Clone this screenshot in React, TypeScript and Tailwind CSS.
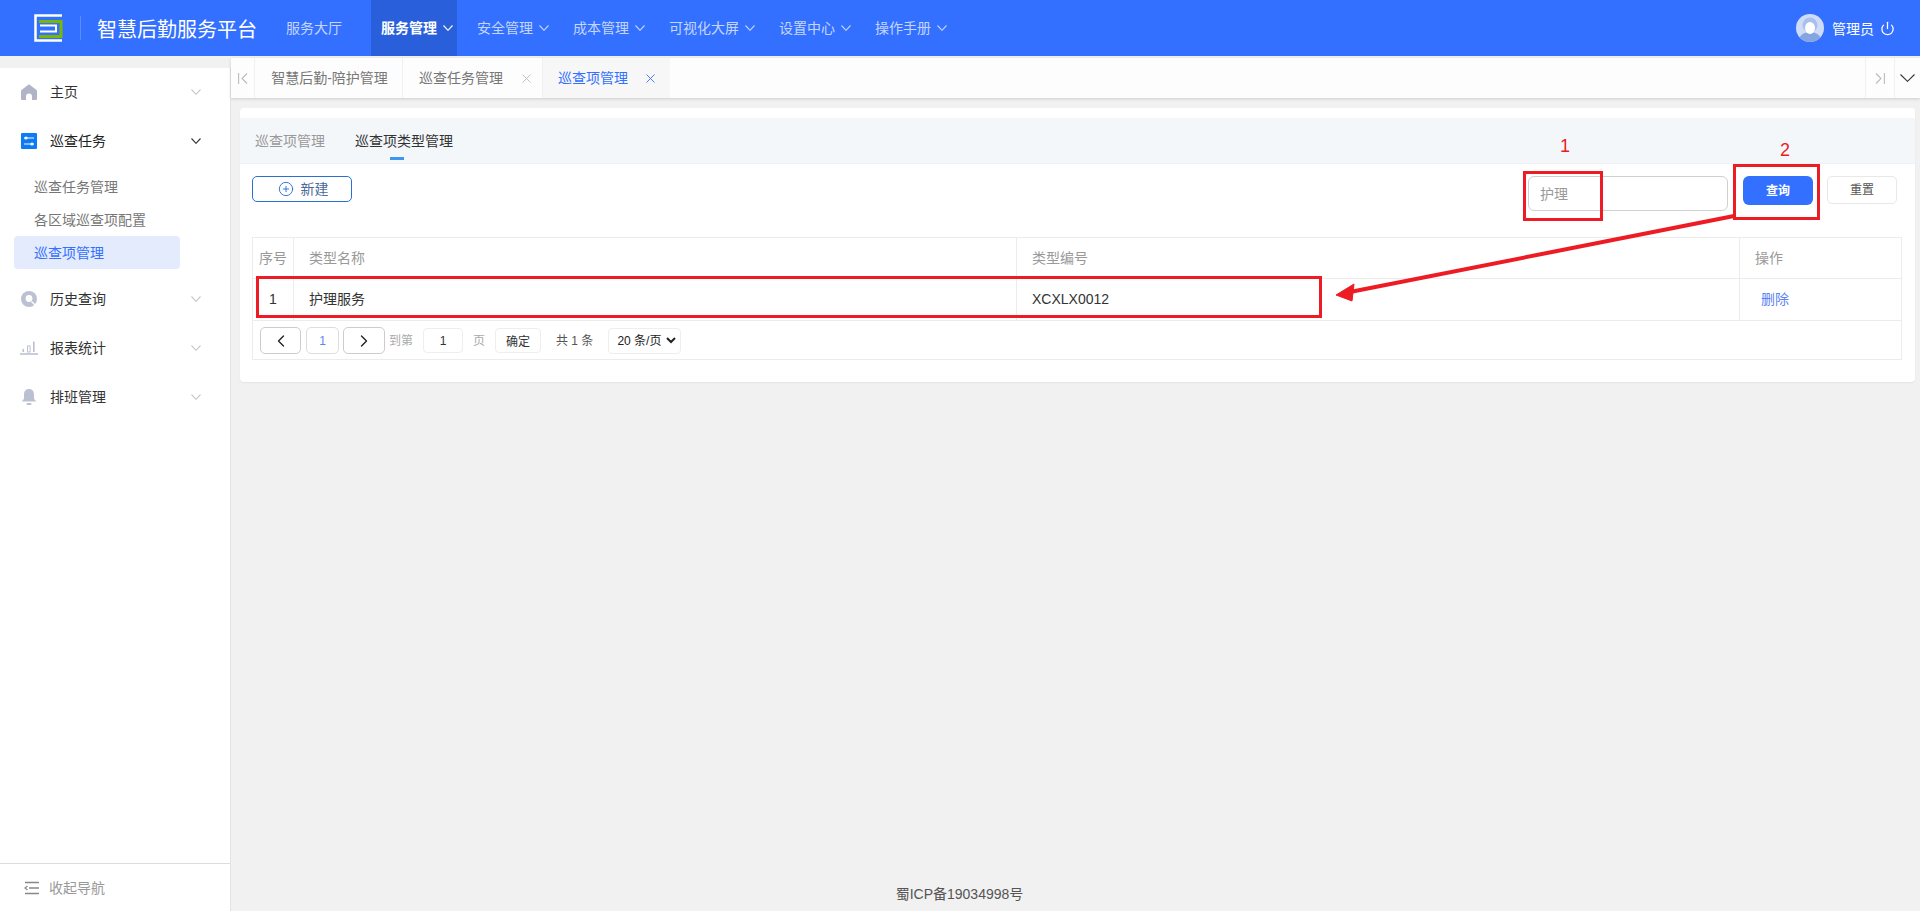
import { ChevronLeft, ChevronRight, PlusCircle, Power } from 'lucide-react';

const topMenus = ['安全管理', '成本管理', '可视化大屏', '设置中心', '操作手册'];

function Chevron({ w = 10, h = 6, className = '' }: { w?: number; h?: number; className?: string }) {
    return (
        <svg width={w} height={h} viewBox={`0 0 ${w} ${h}`} fill="none" stroke="currentColor" strokeWidth="1.1" className={className}>
            <path d={`M0.5 0.5L${w / 2} ${h - 0.7}L${w - 0.5} 0.5`} />
        </svg>
    );
}

function CloseMark({ className = '' }: { className?: string }) {
    return (
        <svg width="9" height="9" viewBox="0 0 9 9" fill="none" stroke="currentColor" strokeWidth="0.9" className={className}>
            <path d="M0.5 0.5L8.5 8.5M8.5 0.5L0.5 8.5" />
        </svg>
    );
}

function Logo() {
    return (
        <svg width="29" height="28" viewBox="0 0 29 28" fill="none">
            <path d="M28 1.5H1.5V26.5H28" stroke="#fff" strokeWidth="2.5" />
            <path d="M5 7.5H27V22.5H5" stroke="#7ab800" strokeWidth="3" />
            <path d="M6 11.5H22V17.5H6" stroke="#fff" strokeWidth="2" />
        </svg>
    );
}

function Avatar() {
    return (
        <svg width="28" height="28" viewBox="0 0 28 28" className="shrink-0">
            <defs>
                <clipPath id="avatar-clip">
                    <circle cx="14" cy="14" r="14" />
                </clipPath>
            </defs>
            <g clipPath="url(#avatar-clip)">
                <rect width="28" height="28" fill="#cfdcf8" />
                <ellipse cx="14" cy="26" rx="11" ry="8" fill="#85a5e0" />
                <circle cx="14" cy="11" r="7.5" fill="#a9c0ee" />
                <ellipse cx="14" cy="14" rx="5" ry="6" fill="#fff" />
            </g>
        </svg>
    );
}

function HomeIcon() {
    return (
        <svg width="16" height="16" viewBox="0 0 16 16">
            <path d="M8 0.3L15.5 6Q16 6.5 16 7.5V15Q16 16 15 16H11V12.5A3 3 0 0 0 5 12.5V16H1Q0 16 0 15V7.5Q0 6.5 0.5 6Z" fill="#b0b4c6" />
        </svg>
    );
}

function TaskIcon() {
    return (
        <svg width="16" height="16" viewBox="0 0 16 16">
            <rect width="16" height="16" rx="1" fill="#0d7bf5" />
            <path d="M3 5H13M3 11H13" stroke="#fff" strokeWidth="1.2" />
            <circle cx="5" cy="5" r="1.6" fill="#fff" />
            <circle cx="11" cy="11" r="1.6" fill="#fff" />
        </svg>
    );
}

function HistoryIcon() {
    return (
        <svg width="16" height="16" viewBox="0 0 16 16" fill="none">
            <circle cx="8" cy="8" r="8" fill="#bcc1d2" />
            <circle cx="8" cy="7.5" r="3.4" fill="#fff" />
            <path d="M10.5 10.5L14.5 14.5" stroke="#fff" strokeWidth="1.2" />
        </svg>
    );
}

function ReportIcon() {
    return (
        <svg width="18" height="14" viewBox="0 0 18 14">
            <path d="M0 13H18" stroke="#bcc1d2" strokeWidth="1.6" />
            <rect x="2.5" y="8" width="1.6" height="3" fill="#bcc1d2" />
            <rect x="7.5" y="5" width="2.6" height="6" fill="none" stroke="#bcc1d2" strokeWidth="1" />
            <rect x="13" y="0.5" width="1.6" height="10.5" fill="#bcc1d2" />
        </svg>
    );
}

function BellIcon() {
    return (
        <svg width="16" height="16" viewBox="0 0 16 16">
            <path d="M8 0C4.5 0 3 2.5 3 5.5V9C3 10.5 1.5 11.5 0.5 12.5H15.5C14.5 11.5 13 10.5 13 9V5.5C13 2.5 11.5 0 8 0Z" fill="#bcc1d2" />
            <rect x="5.5" y="14" width="5" height="2" rx="1" fill="#bcc1d2" />
        </svg>
    );
}

function SideItem({ icon, label, open }: { icon: React.ReactNode; label: string; open?: boolean }) {
    return (
        <div className="flex h-[49px] items-center pr-[29px]">
            <div className="flex w-[50px] pl-[20px]">
                <div className="flex w-[18px] justify-center">{icon}</div>
            </div>
            <span className={`flex-1 text-sm ${open ? 'text-[#222]' : 'text-[#333]'}`}>{label}</span>
            <Chevron className={open ? 'text-[#333]' : 'text-[#c8c8c8]'} />
        </div>
    );
}

function Annotations() {
    return (
        <>
            <div className="absolute left-[1523px] top-[171px] h-[50px] w-[80px] border-[3px] border-[#ed1c24]" />
            <div className="absolute left-[1733px] top-[164px] h-[56px] w-[87px] border-[3px] border-[#ed1c24]" />
            <div className="absolute left-[256px] top-[276px] h-[42px] w-[1066px] border-[3px] border-[#ed1c24]" />
            <span className="absolute left-[1560px] top-[136px] text-lg leading-5 text-[#ed1c24]">1</span>
            <span className="absolute left-[1780px] top-[140px] text-lg leading-5 text-[#ed1c24]">2</span>
            <svg className="absolute left-0 top-0" width="1920" height="911" fill="none">
                <path d="M1734 216L1350 292" stroke="#ed1c24" strokeWidth="4" />
                <path d="M1336 295L1354 284L1352 301Z" fill="#ed1c24" stroke="#ed1c24" />
            </svg>
        </>
    );
}

export default function App() {
    return (
        <div className="relative flex h-screen w-full flex-col overflow-hidden bg-[#f1f1f1] font-['Liberation_Sans','Noto_Sans_CJK_SC',sans-serif]">
            <header className="flex h-[56px] shrink-0 items-center bg-[#3370ff] pr-[25px] text-sm text-[#c4d6ff]">
                <div className="ml-[34px] flex h-[28px] items-center">
                    <Logo />
                </div>
                <div className="ml-[17px] h-[24px] w-px bg-[#5a8cff]" />
                <span className="ml-[16px] pt-[3px] text-xl text-white">智慧后勤服务平台</span>
                <span className="ml-[29px]">服务大厅</span>
                <div className="ml-[29px] flex h-full w-[86px] items-center gap-[6px] bg-[#2a5fdb] pl-[10px] font-semibold text-white">
                    服务管理
                    <Chevron />
                </div>
                {topMenus.map((item, i) => (
                    <div key={i} className="ml-[20px] flex items-center gap-[6px] pr-[4px]">
                        {item}
                        <Chevron />
                    </div>
                ))}
                <div className="ml-auto flex items-center text-sm text-white">
                    <Avatar />
                    <span className="ml-[8px] pt-[1px]">管理员</span>
                    <Power size={15} className="ml-[6px]" />
                </div>
            </header>

            <div className="flex min-h-0 flex-1 pt-[2px]">
                <aside className="mt-[10px] flex w-[231px] shrink-0 flex-col border-r border-[#e4e4e4] bg-white">
                    <div className="-mt-px flex-1">
                        <SideItem icon={<HomeIcon />} label="主页" />
                        <SideItem icon={<TaskIcon />} label="巡查任务" open />
                        <div className="px-[14px] pt-[5px] text-sm text-[#777]">
                            <div className="flex h-[33px] items-center pl-[20px]">巡查任务管理</div>
                            <div className="flex h-[33px] items-center pl-[20px]">各区域巡查项配置</div>
                            <div className="flex h-[33px] w-[166px] items-center rounded bg-[#e3ebfc] pl-[20px] text-[#3370ff]">巡查项管理</div>
                        </div>
                        <div className="pt-[5px]">
                            <SideItem icon={<HistoryIcon />} label="历史查询" />
                            <SideItem icon={<ReportIcon />} label="报表统计" />
                            <SideItem icon={<BellIcon />} label="排班管理" />
                        </div>
                    </div>
                    <div className="flex h-[48px] items-center border-t border-[#ddd] pl-[24px] text-sm text-[#999]">
                        <svg width="16" height="14" viewBox="0 0 16 14" fill="none" stroke="#888" strokeWidth="1.6">
                            <path d="M1 1.5H15M5 7H15M1 12.5H15" />
                            <path d="M3.5 5L1 7L3.5 9" strokeWidth="1.2" />
                        </svg>
                        <span className="ml-[9px]">收起导航</span>
                    </div>
                </aside>

                <main className="flex min-w-0 flex-1 flex-col">
                    <div className="flex h-[40px] shrink-0 items-stretch bg-[#fdfdfd] text-sm text-[#777] shadow-[0_1px_3px_rgba(0,0,0,0.15)]">
                        <div className="flex w-[24px] items-center justify-center border-r border-[#f1f1f1] text-[#bbb]">
                            <svg width="10" height="11" viewBox="0 0 10 11" fill="none" stroke="currentColor" strokeWidth="1.1">
                                <path d="M0.6 0V11M9 0.5L4 5.5L9 10.5" />
                            </svg>
                        </div>
                        <div className="flex w-[148px] items-center justify-center border-r border-[#f1f1f1] pl-[2px]">智慧后勤-陪护管理</div>
                        <div className="flex w-[140px] items-center border-r border-[#f1f1f1] pl-[16px]">
                            巡查任务管理
                            <CloseMark className="ml-[19px] text-[#bbb]" />
                        </div>
                        <div className="flex w-[127px] items-center bg-[#f7f7f7] pl-[15px] text-[#3370ff]">
                            巡查项管理
                            <CloseMark className="ml-[18px]" />
                        </div>
                        <div className="ml-auto flex w-[30px] items-center justify-center border-x border-[#f1f1f1] text-[#bbb]">
                            <svg width="10" height="11" viewBox="0 0 10 11" fill="none" stroke="currentColor" strokeWidth="1.1">
                                <path d="M9.4 0V11M1 0.5L6 5.5L1 10.5" />
                            </svg>
                        </div>
                        <div className="flex w-[25px] items-center justify-center text-[#333]">
                            <Chevron w={15} h={8} />
                        </div>
                    </div>

                    <div className="flex flex-1 flex-col pl-[9px] pr-[5px] pt-[10px]">
                        <section className="h-[274px] rounded-sm bg-white shadow-[0_1px_2px_rgba(0,0,0,0.06)]">
                            <div className="pt-[10px]">
                                <div className="flex h-[46px] items-center gap-[30px] border-b border-[#f0f2f5] bg-[#f4f7fa] pl-[15px] text-sm">
                                    <span className="text-[#999]">巡查项管理</span>
                                    <span className="relative text-[#333]">
                                        巡查项类型管理
                                        <span className="absolute left-[35px] top-[26px] h-[3px] w-[14px] bg-[#3b97f0]" />
                                    </span>
                                </div>
                            </div>
                            <div className="flex items-start justify-between pl-[12px] pr-[18px] pt-[12px]">
                                <button className="flex h-[26px] w-[100px] items-center justify-center gap-[7px] rounded-[5px] border border-[#2a6fd6] pl-[2px] text-sm text-[#4a6a9a]">
                                    <PlusCircle size={16} strokeWidth={1.4} className="text-[#2a6fd6]" />
                                    新建
                                </button>
                                <div className="flex items-start">
                                    <div className="flex h-[35px] w-[200px] items-center rounded-[6px] border border-[#d0d0d0] pl-[11px] text-sm text-[#999]">护理</div>
                                    <button className="ml-[15px] h-[29px] w-[70px] rounded-[6px] bg-[#3370ff] text-xs font-semibold text-white">查询</button>
                                    <button className="ml-[14px] h-[28px] w-[70px] rounded-[5px] border border-[#e8e8e8] text-xs text-[#555]">重置</button>
                                </div>
                            </div>

                            <div className="ml-[12px] mr-[13px] mt-[26px] border border-[#ececec] text-sm">
                                <div className="grid h-[41px] grid-cols-[41px_723px_723px_1fr] border-b border-[#ececec] text-[#999]">
                                    <div className="flex items-center justify-center border-r border-[#ececec]">序号</div>
                                    <div className="flex items-center border-r border-[#ececec] pl-[15px]">类型名称</div>
                                    <div className="flex items-center border-r border-[#ececec] pl-[15px]">类型编号</div>
                                    <div className="flex items-center pl-[15px]">操作</div>
                                </div>
                                <div className="grid h-[42px] grid-cols-[41px_723px_723px_1fr] border-b border-[#ececec] text-[#333]">
                                    <div className="flex items-center justify-center border-r border-[#ececec] pb-[2px]">1</div>
                                    <div className="flex items-center border-r border-[#ececec] pb-[2px] pl-[15px]">护理服务</div>
                                    <div className="flex items-center border-r border-[#ececec] pb-[2px] pl-[15px]">XCXLX0012</div>
                                    <div className="flex items-center pb-[2px] pl-[21px] text-[#5b83f5]">删除</div>
                                </div>
                                <div className="flex h-[38px] items-center pl-[7px] pt-[1px] text-xs text-[#aaa]">
                                    <button className="flex h-[27px] w-[41px] items-center justify-center rounded-[5px] border border-[#ccc] text-[#222]">
                                        <ChevronLeft size={20} strokeWidth={1.6} />
                                    </button>
                                    <button className="ml-[5px] h-[27px] w-[33px] rounded-[5px] border border-[#ddd] text-[#5b83f5]">1</button>
                                    <button className="ml-[4px] flex h-[27px] w-[42px] items-center justify-center rounded-[5px] border border-[#ccc] text-[#222]">
                                        <ChevronRight size={20} strokeWidth={1.6} />
                                    </button>
                                    <span className="ml-[4px]">到第</span>
                                    <div className="ml-[10px] flex h-[25px] w-[40px] items-center justify-center rounded-sm border border-[#eee] text-[#333]">1</div>
                                    <span className="ml-[10px]">页</span>
                                    <button className="ml-[10px] h-[25px] w-[46px] rounded-sm border border-[#eee] pt-[2px] text-[#333]">确定</button>
                                    <span className="ml-[15px] text-[#555]">共 1 条</span>
                                    <div className="ml-[15px] flex h-[26px] w-[73px] items-center gap-[5px] rounded-sm border border-[#eee] pl-[8px] text-[#222]">
                                        20 条/页
                                        <svg width="10" height="7" viewBox="0 0 10 7" fill="none" stroke="currentColor" strokeWidth="2">
                                            <path d="M1 1L5 5L9 1" />
                                        </svg>
                                    </div>
                                </div>
                            </div>
                        </section>
                        <div className="mt-auto pb-[7px] text-center text-sm text-[#555]">
                            <span className="relative left-[-118px]">蜀ICP备19034998号</span>
                        </div>
                    </div>
                </main>
            </div>
            <Annotations />
        </div>
    );
}
